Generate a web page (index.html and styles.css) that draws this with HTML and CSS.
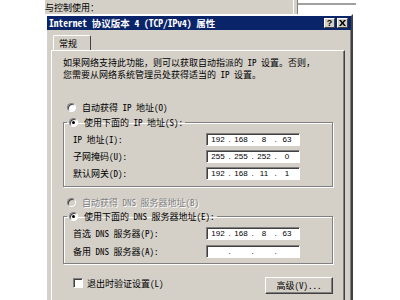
FILE: index.html
```html
<!DOCTYPE html>
<html lang="zh-CN">
<head>
    <meta charset="UTF-8">
    <title>Internet 协议版本 4 (TCP/IPv4) 属性</title>
    <link rel="stylesheet" href="styles.css">
</head>
<body>
    <div class="backwin"><span class="backwin-text">与控制使用：</span></div>
    <div class="backlist"></div>

    <div class="dialog">
        <div class="titlebar">
            <span class="title">Internet 协议版本 4 (TCP/IPv4) 属性</span>
            <span class="capbtn">?</span>
            <span class="capbtn">
                <svg width="7" height="6" viewBox="0 0 7 6"><path d="M0 0h2l1.5 2 1.5-2h2l-2.5 3 2.5 3h-2l-1.5-2-1.5 2h-2l2.5-3z" fill="#000"/></svg>
            </span>
        </div>

        <div class="tabs"><span class="tab">常规</span></div>

        <div class="panel">
            <div class="intro">
                <span class="intro-line">如果网络支持此功能，则可以获取自动指派的 IP 设置。否则，</span>
                <span class="intro-line">您需要从网络系统管理员处获得适当的 IP 设置。</span>
            </div>

            <div class="option option-first"><span class="radio"></span>自动获得 IP 地址(O)</div>

            <fieldset class="group">
                <legend class="option"><span class="radio checked"></span>使用下面的 IP 地址(S):</legend>
                <div class="field">
                    <span class="field-label">IP 地址(I):</span>
                    <span class="ipbox"><span class="oct">192</span><span class="dot">.</span><span class="oct">168</span><span class="dot">.</span><span class="oct">8</span><span class="dot">.</span><span class="oct">63</span></span>
                </div>
                <div class="field">
                    <span class="field-label">子网掩码(U):</span>
                    <span class="ipbox"><span class="oct">255</span><span class="dot">.</span><span class="oct">255</span><span class="dot">.</span><span class="oct">252</span><span class="dot">.</span><span class="oct">0</span></span>
                </div>
                <div class="field">
                    <span class="field-label">默认网关(D):</span>
                    <span class="ipbox"><span class="oct">192</span><span class="dot">.</span><span class="oct">168</span><span class="dot">.</span><span class="oct">11</span><span class="dot">.</span><span class="oct">1</span></span>
                </div>
            </fieldset>

            <div class="option option-dns disabled"><span class="radio off"></span>自动获得 DNS 服务器地址(B)</div>

            <fieldset class="group group-dns">
                <legend class="option"><span class="radio checked"></span>使用下面的 DNS 服务器地址(E):</legend>
                <div class="field">
                    <span class="field-label">首选 DNS 服务器(P):</span>
                    <span class="ipbox"><span class="oct">192</span><span class="dot">.</span><span class="oct">168</span><span class="dot">.</span><span class="oct">8</span><span class="dot">.</span><span class="oct">63</span></span>
                </div>
                <div class="field field-alt">
                    <span class="field-label">备用 DNS 服务器(A):</span>
                    <span class="ipbox"><span class="oct"></span><span class="dot">.</span><span class="oct"></span><span class="dot">.</span><span class="oct"></span><span class="dot">.</span><span class="oct"></span></span>
                </div>
            </fieldset>

            <div class="footer">
                <div class="check-row"><span class="checkbox"></span>退出时验证设置(L)</div>
                <span class="button">高级(V)...</span>
            </div>
        </div>
    </div>
</body>
</html>
```

FILE: styles.css
```css
body {
    margin: 0;
    width: 400px;
    height: 300px;
    overflow: hidden;
    position: relative;
    background: #fff;
    font-family: "Noto Sans Mono CJK SC", "Noto Sans CJK SC", sans-serif;
    font-size: 9px;
    color: #000;
}

/* windows behind the dialog */
.backwin {
    position: absolute;
    left: 45px;
    top: 0;
    width: 248px;
    height: 16px;
    background: #d4d0c8;
    border-right: 1px solid #fff;
    overflow: hidden;
}
.backwin-text {
    display: block;
    margin: 3px 0 0 0;
    line-height: 10px;
    white-space: nowrap;
}
.backlist {
    position: absolute;
    left: 294px;
    top: 0;
    width: 59px;
    height: 16px;
    border-left: 3px solid #d4d0c8;
    background: linear-gradient(#fff 3px, #a0a0a0 3px, #a0a0a0 5px, #fff 5px);
    box-shadow: inset 1px 0 #808080;
}

/* dialog frame */
.dialog {
    position: absolute;
    left: 45px;
    top: 14px;
    width: 308px;
    height: 300px;
    box-sizing: border-box;
    background: #d4d0c8;
    border: 2px solid;
    border-color: #fff #404040 #404040 #fff;
    box-shadow: inset -1px 0 #808080;
}
.titlebar {
    display: flex;
    align-items: center;
    height: 14px;
    padding: 0 3px 0 2px;
    background: #0a246a;
    color: #fff;
}
.title {
    flex: 1;
    font-weight: bold;
    font-size: 9.5px;
    white-space: nowrap;
}
.capbtn {
    display: flex;
    align-items: center;
    justify-content: center;
    width: 11px;
    height: 10px;
    margin-left: 2px;
    box-sizing: border-box;
    background: #d4d0c8;
    border: 1px solid;
    border-color: #fff #404040 #404040 #fff;
    color: #000;
    font-family: "Liberation Sans", sans-serif;
    font-weight: bold;
    font-size: 9px;
    line-height: 8px;
}

/* tab strip */
.tabs {
    display: flex;
    margin: 5px 0 0 6px;
    height: 15px;
}
.tab {
    width: 38px;
    box-sizing: border-box;
    padding: 3px 0 0 5px;
    border: 1px solid;
    border-bottom: none;
    border-color: #fff #404040 transparent #fff;
    border-radius: 2px 2px 0 0;
    line-height: 10px;
}
.panel {
    margin: 0 6px 0 4px;
    height: 260px;
    padding: 0 11px;
    border: 1px solid;
    border-color: #fff #404040 #404040 #fff;
    box-shadow: inset -1px 0 #808080;
}

.intro {
    display: flex;
    flex-direction: column;
    margin-top: 6px;
}
.intro-line {
    height: 12px;
    line-height: 12px;
    white-space: nowrap;
}

/* radio rows */
.option {
    display: flex;
    align-items: center;
    height: 14px;
    white-space: nowrap;
}
.option-first {
    margin: 19px 0 0 4px;
}
.option-dns {
    margin: 8px 0 0 4px;
}
.disabled {
    color: #808080;
    text-shadow: 1px 1px #fff;
}
.radio {
    position: relative;
    width: 9px;
    height: 9px;
    margin-right: 6px;
    box-sizing: border-box;
    border-radius: 50%;
    border: 1px solid;
    border-color: #808080 #fff #fff #808080;
    background: #fff;
    box-shadow: inset 1px 1px #404040;
}
.radio.off {
    background: #d4d0c8;
}
.radio.checked::after {
    content: "";
    position: absolute;
    left: 2px;
    top: 2px;
    width: 3px;
    height: 3px;
    border-radius: 50%;
    background: #000;
}

/* group boxes */
.group {
    margin: 1px 0 0;
    padding: 0 0 6px 9px;
    border: 1px solid #808080;
    box-shadow: 1px 1px 0 #fff, inset 1px 1px 0 #fff;
}
.group legend {
    margin-left: -6px;
    padding: 0 2px 0 2px;
}
.group-dns {
    margin-top: 0;
    padding-bottom: 5px;
}
.field {
    display: flex;
    align-items: center;
    height: 14px;
    margin-top: 3px;
}
.field-alt {
    margin-top: 4px;
}
.field-label {
    width: 133px;
    white-space: nowrap;
}
.ipbox {
    display: flex;
    align-items: center;
    width: 94px;
    height: 13px;
    box-sizing: border-box;
    padding-left: 1px;
    background: #fff;
    border: 1px solid;
    border-color: #808080 #fff #fff #808080;
    box-shadow: inset 1px 1px #404040;
    font-family: "Liberation Sans", sans-serif;
    font-size: 8px;
}
.oct {
    width: 20px;
    text-align: center;
}
.dot {
    width: 3px;
    text-align: center;
}

/* bottom row */
.footer {
    display: flex;
    align-items: flex-start;
    justify-content: space-between;
    margin-top: 13px;
}
.check-row {
    display: flex;
    align-items: center;
    height: 12px;
    margin: 0 0 0 10px;
    white-space: nowrap;
}
.checkbox {
    width: 10px;
    height: 10px;
    margin-right: 4px;
    box-sizing: border-box;
    border: 1px solid;
    border-color: #808080 #fff #fff #808080;
    background: #fff;
    box-shadow: inset 1px 1px #404040;
}
.button {
    width: 68px;
    height: 17px;
    box-sizing: border-box;
    border: 1px solid;
    border-color: #fff #404040 #404040 #fff;
    box-shadow: inset -1px -1px #808080;
    text-align: center;
    line-height: 15px;
}
```
